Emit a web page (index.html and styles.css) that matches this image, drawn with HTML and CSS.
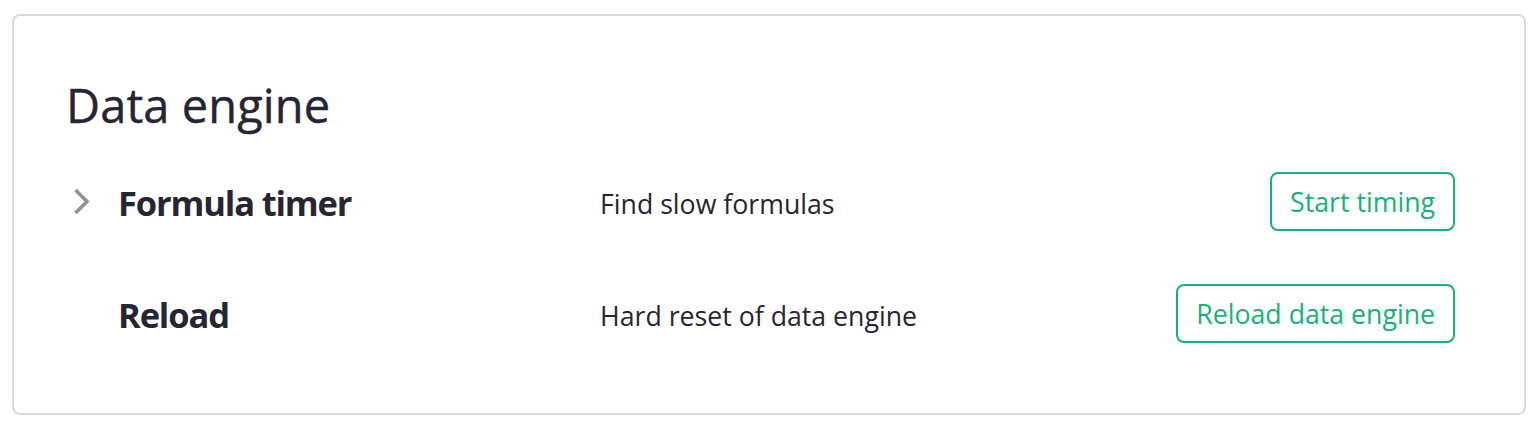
FILE: index.html
```html
<!DOCTYPE html>
<html>
<head>
<meta charset="utf-8">
<link rel="stylesheet" href="styles.css">
</head>
<body>
<section class="card">
  <h1 class="title">Data engine</h1>
  <div class="rows">
    <div class="row">
      <div class="expander">
        <svg width="18" height="28" viewBox="0 0 18 28"><polyline points="2.5,2 14,13.5 2.5,25" fill="none" stroke="#929299" stroke-width="3.6" stroke-linecap="butt" stroke-linejoin="miter"/></svg>
      </div>
      <div class="label">Formula timer</div>
      <div class="desc">Find slow formulas</div>
      <div class="action"><button class="btn">Start timing</button></div>
    </div>
    <div class="row">
      <div class="expander"></div>
      <div class="label">Reload</div>
      <div class="desc">Hard reset of data engine</div>
      <div class="action"><button class="btn">Reload data engine</button></div>
    </div>
  </div>
</section>
</body>
</html>
```
FILE: styles.css
```css
html, body {
  margin: 0;
  padding: 0;
  background: #ffffff;
}
body {
  font-family: "Open Sans", "Noto Sans", "Liberation Sans", sans-serif;
  color: #262633;
}
.card {
  margin: 14px 12px 0 12px;
  width: 1514px;
  height: 401px;
  box-sizing: border-box;
  border: 2px solid #d9d9d9;
  border-radius: 8px;
  padding: 60px 69px 0 52px;
}
.title {
  margin: 0;
  font-size: 47px;
  font-weight: 500;
  line-height: 58px;
  letter-spacing: 0.1px;
  -webkit-text-stroke: 0.4px #262633;
}
.rows {
  margin-top: 38px;
  display: flex;
  flex-direction: column;
  gap: 53px;
}
.row {
  display: flex;
  align-items: center;
  height: 59px;
}
.expander {
  width: 52px;
  display: flex;
  align-items: center;
  padding-left: 7px;
  box-sizing: border-box;
  height: 28px;
}
.expander svg { display: block; }
.label {
  width: 482px;
  font-size: 34.5px;
  font-weight: 700;
  letter-spacing: -1.15px;
  padding-top: 2px;
}
.desc {
  flex: 1;
  font-size: 26.7px;
  padding-top: 3px;
}
.action {
  display: flex;
  justify-content: flex-end;
}
.btn {
  height: 59px;
  box-sizing: border-box;
  border: 2px solid #16b378;
  border-radius: 8px;
  background: #ffffff;
  color: #16b378;
  font-family: inherit;
  font-size: 26.7px;
  padding: 0 18px;
}
```
